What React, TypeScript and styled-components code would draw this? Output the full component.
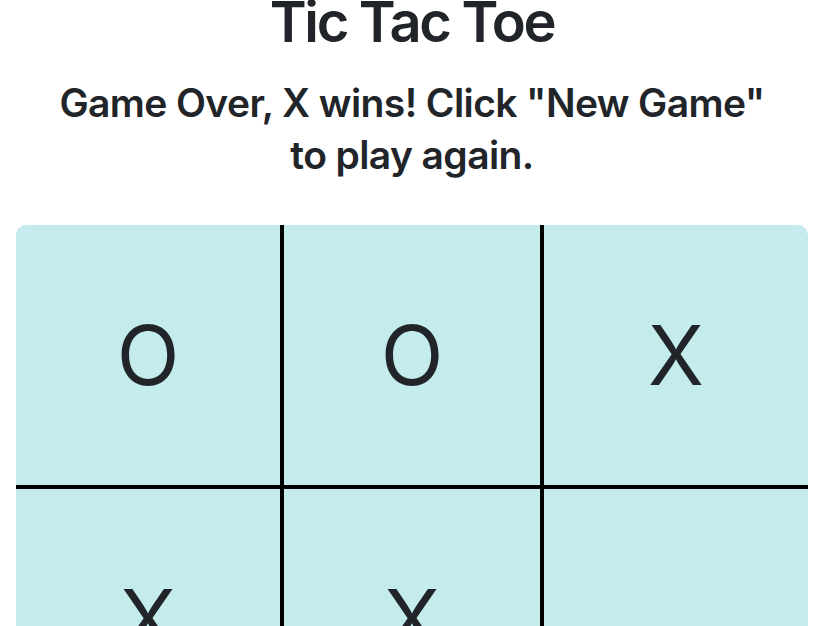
import React from "react";
import styled, { createGlobalStyle } from "styled-components";

const GlobalStyle = createGlobalStyle`
  html, body {
    margin: 0;
    padding: 0;
    background: #ffffff;
  }
  body {
    font-family: Inter, "Noto Sans", "Liberation Sans", sans-serif;
    color: #212529;
    overflow: hidden;
  }
`;

const Page = styled.main`
  display: flex;
  flex-direction: column;
  align-items: center;
  padding: 0 16px;
  text-align: center;
`;

const Title = styled.h1`
  margin: -11px 0 0;
  font-size: 56px;
  font-weight: 600;
  line-height: 1.2;
  letter-spacing: -2.3px;
`;

const Status = styled.p`
  margin: 21px 0 0;
  font-size: 39px;
  font-weight: 600;
  line-height: 52px;
  letter-spacing: -0.6px;
`;

const Board = styled.div`
  margin-top: 44px;
  align-self: stretch;
  display: grid;
  grid-template-columns: repeat(3, 1fr);
  background: #c5ecec;
  border-radius: 10px;
  overflow: hidden;
`;

const Cell = styled.button<{ $midCol: boolean; $midRow: boolean }>`
  box-sizing: border-box;
  height: ${(p) => (p.$midRow ? "268px" : "260px")};
  padding: 0;
  margin: 0;
  display: flex;
  align-items: center;
  justify-content: center;
  background: transparent;
  border: 0 solid #000;
  border-left-width: ${(p) => (p.$midCol ? "4px" : "0")};
  border-right-width: ${(p) => (p.$midCol ? "4px" : "0")};
  border-top-width: ${(p) => (p.$midRow ? "4px" : "0")};
  border-bottom-width: ${(p) => (p.$midRow ? "4px" : "0")};
  font-family: Inter, "Noto Sans", "Liberation Sans", sans-serif;
  font-size: 82px;
  font-weight: 400;
  color: #212529;
  cursor: pointer;
`;

const squares = ["O", "O", "X", "X", "X", "", "", "O", "O"];

export default function App() {
  return (
    <>
      <GlobalStyle />
      <Page>
        <Title>Tic Tac Toe</Title>
        <Status>
          Game Over, X wins! Click "New Game"
          <br />
          to play again.
        </Status>
        <Board>
          {squares.map((value, i) => (
            <Cell
              key={i}
              $midCol={i % 3 === 1}
              $midRow={Math.floor(i / 3) === 1}
            >
              {value}
            </Cell>
          ))}
        </Board>
      </Page>
    </>
  );
}
